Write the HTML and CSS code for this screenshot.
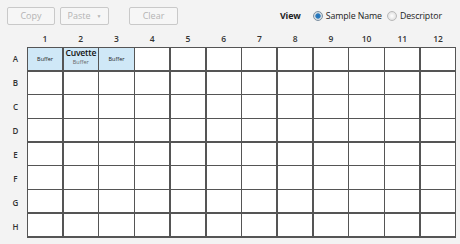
FILE: index.html
```html
<!DOCTYPE html>
<html>
<head>
<meta charset="utf-8">
<link rel="stylesheet" href="styles.css">
</head>
<body>
<div class="page">
  <div class="toolbar">
    <button class="btn btn-copy">Copy</button>
    <button class="btn btn-paste">Paste <span class="caret">&#9660;</span></button>
    <button class="btn btn-clear">Clear</button>
    <div class="view">
      <span class="view-label">View</span>
      <label class="radio"><span class="dot on"></span>Sample Name</label>
      <label class="radio"><span class="dot"></span>Descriptor</label>
    </div>
  </div>
  <div class="plate">
    <div class="corner"></div>
    <div class="cols">
      <span>1</span><span>2</span><span>3</span><span>4</span><span>5</span><span>6</span>
      <span>7</span><span>8</span><span>9</span><span>10</span><span>11</span><span>12</span>
    </div>
    <div class="rows">
      <span>A</span><span>B</span><span>C</span><span>D</span><span>E</span><span>F</span><span>G</span><span>H</span>
    </div>
    <div class="grid" id="grid">
      <div class="cell filled"><span class="small">Buffer</span></div>
      <div class="cell filled top"><span class="big">Cuvette</span><span class="small under">Buffer</span></div>
      <div class="cell filled"><span class="small">Buffer</span></div>
    </div>
  </div>
</div>
<script src="script.js"></script>
</body>
</html>
```
FILE: script.js
```js
var g = document.getElementById('grid');
for (var i = 3; i < 96; i++) {
  var d = document.createElement('div');
  d.className = 'cell';
  g.appendChild(d);
}
```
FILE: styles.css
```css
html, body {
  margin: 0;
  padding: 0;
  background: #f3f3f3;
  font-family: "Open Sans", "DejaVu Sans", sans-serif;
}
.page {
  width: 460px;
  height: 244px;
  overflow: hidden;
}
.toolbar {
  display: flex;
  align-items: center;
  height: 31px;
  padding-left: 7px;
}
.btn {
  height: 18px;
  border: 1px solid #c9c9c9;
  border-radius: 2px;
  background: #f6f6f6;
  color: #b4b4b4;
  font-family: "Open Sans", sans-serif;
  font-size: 9px;
  padding: 0;
  margin: 0;
  display: flex;
  align-items: center;
  justify-content: center;
}
.btn-copy { width: 48px; }
.btn-paste { width: 49px; margin-left: 5px; }
.btn-clear { width: 49px; margin-left: 20px; }
.caret { font-size: 5px; margin-left: 6px; }
.view {
  display: flex;
  align-items: center;
  margin-left: 102px;
  font-size: 8.8px;
  color: #222;
  letter-spacing: -0.1px;
}
.view-label {
  font-weight: bold;
  margin-right: 12px;
}
.radio {
  display: flex;
  align-items: center;
  margin-right: 5px;
}
.dot {
  width: 10px;
  height: 10px;
  border-radius: 50%;
  border: 1px solid #b9b9b9;
  background: radial-gradient(circle, #ffffff 0%, #d6d6d6 100%);
  margin-right: 3px;
  box-sizing: border-box;
}
.dot.on {
  border-color: #7c8fa0;
  background: radial-gradient(circle, #1f6fb8 0, #2f7fc0 2.3px, #cfd8e0 3px, #e9edf0 100%);
}
.plate {
  display: grid;
  grid-template-columns: 27px 429px;
  grid-template-rows: 16px 191px;
}
.cols {
  display: grid;
  grid-template-columns: repeat(12, 1fr);
  font-size: 8.5px;
  font-weight: 600;
  color: #333;
  text-align: center;
  align-items: center;
  padding-bottom: 1px;
}
.rows {
  display: grid;
  grid-template-rows: repeat(8, 1fr);
  font-size: 8px;
  font-weight: 600;
  color: #333;
  align-items: center;
  text-align: center;
  padding-left: 4px;
}
.grid {
  display: grid;
  grid-template-columns: repeat(12, 1fr);
  grid-template-rows: repeat(8, 1fr);
  gap: 1.5px;
  padding: 1px 1px 2px 1px;
  background: #555555;
  box-sizing: border-box;
  height: 191px;
}
.cell {
  background: #ffffff;
  display: flex;
  flex-direction: column;
  align-items: center;
  justify-content: center;
  min-width: 0;
}
.cell.filled {
  background: #cfe8f7;
}
.cell.top {
  justify-content: flex-start;
  padding-top: 0;
}
.small {
  font-size: 5.5px;
  color: #222;
  line-height: 6px;
}
.big {
  font-size: 8.6px;
  font-weight: 600;
  color: #111;
  line-height: 10px;
  letter-spacing: -0.2px;
  white-space: nowrap;
}
.under {
  color: #666;
  margin-top: 1px;
}
```
